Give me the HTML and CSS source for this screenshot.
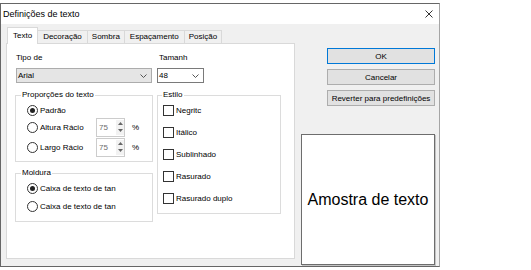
FILE: index.html
```html
<!DOCTYPE html>
<html lang="pt">
<head>
  <meta charset="UTF-8">
  <title>Definições de texto</title>
  <link rel="stylesheet" href="styles.css">
</head>
<body>
  <div class="window">
    <div class="titlebar">
      <span class="title">Definições de texto</span>
      <svg class="close" width="8" height="8" viewBox="0 0 8 8"><path d="M0.5 0.5L7.5 7.5M7.5 0.5L0.5 7.5" stroke="#333" stroke-width="1" fill="none"/></svg>
    </div>
    <div class="content">
      <div class="tabs">
        <div class="tab-strip">
          <div class="tab active">Texto</div>
          <div class="tab tab-wide">Decoração</div>
          <div class="tab">Sombra</div>
          <div class="tab tab-wide">Espaçamento</div>
          <div class="tab">Posição</div>
        </div>
        <div class="tab-panel">
          <div class="col col-left">
            <div class="label">Tipo de</div>
            <div class="combo combo-font">
              <span>Arial</span>
              <svg width="7" height="4" viewBox="0 0 7 4"><path d="M0.5 0.5L3.5 3.5L6.5 0.5" stroke="#555" fill="none"/></svg>
            </div>
            <fieldset class="group group-ratio">
              <legend>Proporções do texto</legend>
              <div class="row"><span class="radio checked"></span><span>Padrão</span></div>
              <div class="row row-spin">
                <div class="radio-label"><span class="radio"></span><span>Altura Rácio</span></div>
                <div class="spin">
                  <span class="spin-value">75</span>
                  <div class="spin-buttons">
                    <svg width="5" height="3" viewBox="0 0 5 3"><path d="M0 3L2.5 0L5 3Z" fill="#666"/></svg>
                    <svg width="5" height="3" viewBox="0 0 5 3"><path d="M0 0L2.5 3L5 0Z" fill="#666"/></svg>
                  </div>
                </div>
                <span class="pct">%</span>
              </div>
              <div class="row row-spin">
                <div class="radio-label"><span class="radio"></span><span>Largo Rácio</span></div>
                <div class="spin">
                  <span class="spin-value">75</span>
                  <div class="spin-buttons">
                    <svg width="5" height="3" viewBox="0 0 5 3"><path d="M0 3L2.5 0L5 3Z" fill="#666"/></svg>
                    <svg width="5" height="3" viewBox="0 0 5 3"><path d="M0 0L2.5 3L5 0Z" fill="#666"/></svg>
                  </div>
                </div>
                <span class="pct">%</span>
              </div>
            </fieldset>
            <fieldset class="group group-frame">
              <legend>Moldura</legend>
              <div class="row"><span class="radio checked"></span><span>Caixa de texto de tan</span></div>
              <div class="row row-gap"><span class="radio"></span><span>Caixa de texto de tan</span></div>
            </fieldset>
          </div>
          <div class="col col-right">
            <div class="label label-size">Tamanh</div>
            <div class="combo combo-size">
              <span>48</span>
              <svg width="7" height="4" viewBox="0 0 7 4"><path d="M0.5 0.5L3.5 3.5L6.5 0.5" stroke="#555" fill="none"/></svg>
            </div>
            <fieldset class="group group-style">
              <legend>Estilo</legend>
              <div class="row check-row"><span class="checkbox"></span><span>Negritc</span></div>
              <div class="row check-row"><span class="checkbox"></span><span>Itálico</span></div>
              <div class="row check-row"><span class="checkbox"></span><span>Sublinhado</span></div>
              <div class="row check-row"><span class="checkbox"></span><span>Rasurado</span></div>
              <div class="row check-row"><span class="checkbox"></span><span>Rasurado duplo</span></div>
            </fieldset>
          </div>
        </div>
      </div>
      <div class="side">
        <button class="btn btn-default">OK</button>
        <button class="btn">Cancelar</button>
        <button class="btn">Reverter para predefinições</button>
        <div class="preview">Amostra de texto</div>
      </div>
    </div>
  </div>
</body>
</html>
```

FILE: styles.css
```css
* {
  box-sizing: border-box;
}

body {
  margin: 0;
  background-color: #ffffff;
  font-family: "Liberation Sans", Arial, sans-serif;
  font-size: 8px;
  color: #000000;
}

.window {
  width: 440px;
  height: 264px;
  margin-top: 3px;
  border: 1px solid #666666;
  border-right-color: #a5a5a5;
  background-color: #f0f0f0;
  display: flex;
  flex-direction: column;
}

.titlebar {
  height: 20px;
  background-color: #ffffff;
  display: flex;
  align-items: center;
  justify-content: space-between;
  padding: 0 6px 0 2px;
}

.title {
  font-size: 9px;
}

.content {
  flex: 1;
  display: flex;
  padding: 3px 4px 0 5px;
}

.tabs {
  width: 289px;
  display: flex;
  flex-direction: column;
}

.tab-strip {
  height: 16px;
  display: flex;
  align-items: flex-end;
  padding-left: 1px;
}

.tab {
  height: 13px;
  line-height: 12px;
  padding: 0 4px;
  border: 1px solid #d9d9d9;
  border-bottom: none;
  margin-right: -1px;
  background-color: #f0f0f0;
}

.tab-wide {
  padding: 0 5px;
}

.tab.active {
  height: 17px;
  line-height: 15px;
  padding: 0 5px;
  margin-bottom: -1px;
  background-color: #ffffff;
  position: relative;
  z-index: 1;
}

.tab-panel {
  height: 216px;
  background-color: #ffffff;
  border: 1px solid #d9d9d9;
  display: flex;
  gap: 4px;
  padding: 9px 0 0 8px;
}

.col-left {
  width: 138px;
}

.col-right {
  width: 124px;
}

.label {
  height: 10px;
  line-height: 10px;
  margin: 0 0 5px 1px;
  white-space: nowrap;
}

.label-size {
  margin-left: 2px;
}

.combo {
  height: 15px;
  display: flex;
  align-items: center;
  justify-content: space-between;
  padding: 0 4px 0 1px;
}

.combo-font {
  width: 136px;
  margin-left: 1px;
  background-color: #e5e5e5;
  border: 1px solid #acacac;
}

.combo-size {
  width: 47px;
  background-color: #ffffff;
  border: 1px solid #7a7a7a;
}

.group {
  margin: 7px 0 0;
  padding: 3px 0 4px;
  border: 1px solid #dcdcdc;
  min-width: 0;
}

.group legend {
  padding: 0 1px;
  margin-left: 5px;
  line-height: 10px;
}

.group-frame {
  margin-top: 6px;
  padding-bottom: 8px;
}

.group-style {
  padding-bottom: 8px;
}

.group-style legend {
  margin-left: 4px;
}

.row {
  height: 14px;
  display: flex;
  align-items: center;
  gap: 2px;
  margin-left: 11px;
  white-space: nowrap;
}

.row-spin {
  height: 20px;
  gap: 0;
}

.group-ratio .row-spin:first-of-type {
  margin-top: 7px;
}

.row-gap {
  margin-top: 4px;
}

.radio-label {
  width: 69px;
  display: flex;
  align-items: center;
  gap: 2px;
}

.radio {
  width: 11px;
  height: 11px;
  border: 1px solid #333333;
  border-radius: 50%;
  background-color: #ffffff;
  display: flex;
  align-items: center;
  justify-content: center;
  flex-shrink: 0;
}

.radio.checked::after {
  content: "";
  width: 5px;
  height: 5px;
  border-radius: 50%;
  background-color: #222222;
}

.spin {
  width: 29px;
  height: 19px;
  border: 1px solid #cccccc;
  background-color: #ffffff;
  display: flex;
  align-items: center;
  justify-content: space-between;
  padding: 1px 0 1px 2px;
}

.spin-value {
  color: #6d6d6d;
}

.spin-buttons {
  width: 8px;
  height: 100%;
  display: flex;
  flex-direction: column;
  align-items: center;
  justify-content: space-around;
  background-color: #f2f2f2;
}

.pct {
  margin-left: 7px;
}

.check-row {
  margin-left: 5px;
}

.check-row + .check-row {
  margin-top: 8px;
}

.checkbox {
  width: 11px;
  height: 11px;
  border: 1px solid #333333;
  background-color: #ffffff;
  flex-shrink: 0;
}

.side {
  width: 134px;
  margin-left: 6px;
  padding-top: 21px;
  display: flex;
  flex-direction: column;
  align-items: flex-end;
}

.btn {
  width: 108px;
  height: 16px;
  margin: 0 0 5px;
  padding: 0;
  font-family: "Liberation Sans", Arial, sans-serif;
  font-size: 8px;
  color: #000000;
  background-color: #e1e1e1;
  border: 1px solid #adadad;
}

.btn-default {
  border-color: #0078d7;
}

.preview {
  width: 134px;
  height: 131px;
  margin-top: 23px;
  background-color: #ffffff;
  border: 1px solid #6d6d6d;
  box-shadow: 1px 1px 0 #c4c4c4;
  display: flex;
  align-items: center;
  justify-content: center;
  font-size: 16px;
}
```
